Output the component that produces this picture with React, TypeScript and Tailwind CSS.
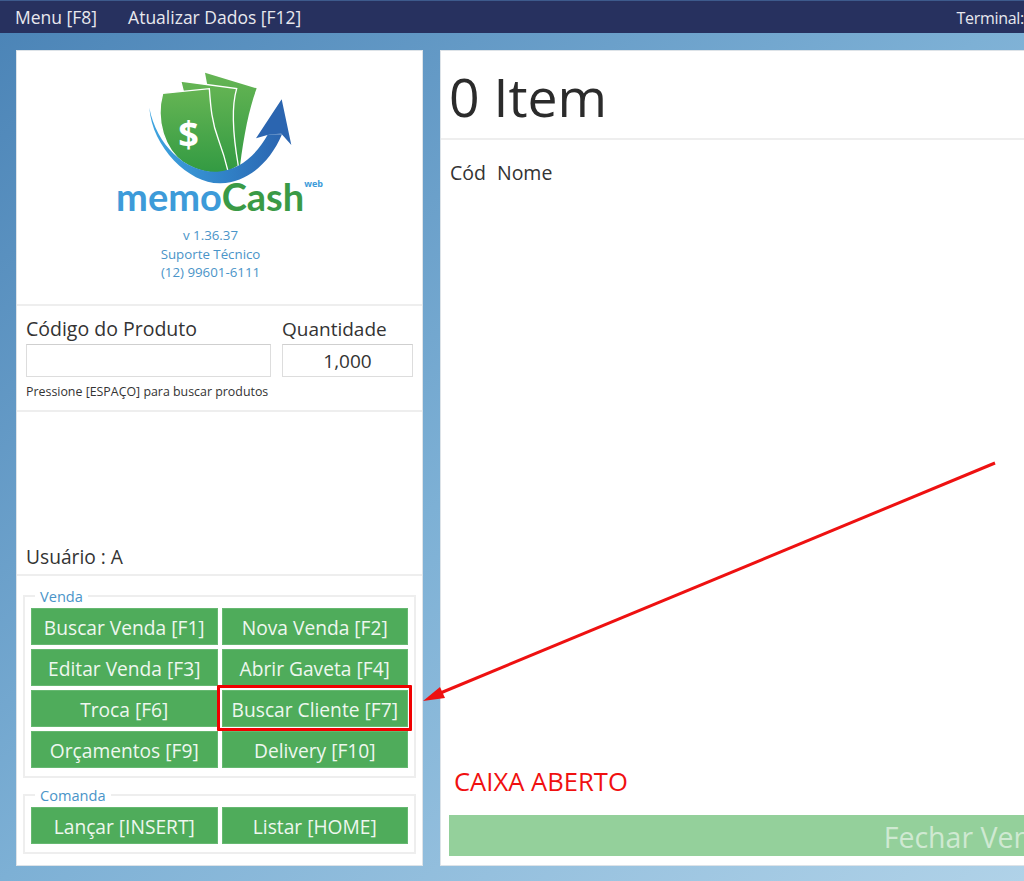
const vendaButtons = [
  "Buscar Venda [F1]",
  "Nova Venda [F2]",
  "Editar Venda [F3]",
  "Abrir Gaveta [F4]",
  "Troca [F6]",
  "Buscar Cliente [F7]",
  "Orçamentos [F9]",
  "Delivery [F10]",
];

const comandaButtons = ["Lançar [INSERT]", "Listar [HOME]"];

const Logo = () => (
  <svg width="260" height="135" viewBox="0 0 780 405" className="shrink-0">
    <defs>
      <linearGradient id="note" x1="0" y1="0" x2="0" y2="1">
        <stop offset="0" stopColor="#66b554" />
        <stop offset="1" stopColor="#329a42" />
      </linearGradient>
      <linearGradient id="arc" x1="0" y1="0" x2="1" y2="0">
        <stop offset="0" stopColor="#3fa5e0" />
        <stop offset="0.55" stopColor="#3183c8" />
        <stop offset="1" stopColor="#2b65b0" />
      </linearGradient>
    </defs>
    {/* back note */}
    <path d="M345 65 L500 112 C478 170 462 250 450 345 L400 360 Z" fill="url(#note)" />
    {/* middle note */}
    <path
      d="M272 90 L440 113 C420 180 432 270 445 345 L415 362 L300 200 Z"
      fill="url(#note)"
      stroke="#fff"
      strokeWidth="4"
    />
    {/* front note */}
    <path
      d="M218 127 L358 113 C362 170 366 215 385 265 C398 300 408 335 415 364 C370 372 320 362 280 335 C225 295 195 210 218 127 Z"
      fill="url(#note)"
      stroke="#fff"
      strokeWidth="4"
    />
    <text
      x="296"
      y="288"
      textAnchor="middle"
      fontSize="108"
      fontWeight="700"
      fill="#fff"
      fontFamily="'Open Sans', sans-serif"
    >
      $
    </text>
    {/* swoosh + arrow */}
    <path
      d="M178 170 C186 290 300 400 392 397 C475 393 540 335 576 250 L534 250 C498 315 445 358 382 362 C290 366 200 285 178 170 Z"
      fill="url(#arc)"
    />
    <path d="M575 145 L498 262 L540 250 L574 248 L604 282 Z" fill="#2b65b0" />
  </svg>
);

const GreenButton = ({ label }: { label: string }) => (
  <button className="relative h-[37px] pt-[3px] bg-[#4fac5b] border border-[#66b871] text-[19.2px] text-[#eef7ef] flex items-center justify-center whitespace-nowrap">
    {label}
    {label === "Buscar Cliente [F7]" && (
      <span className="absolute -left-[6px] -right-[5px] -top-[6px] -bottom-[5px] border-[3px] border-[#f00000] rounded-[1px]" />
    )}
  </button>
);

const Group = ({ title, buttons }: { title: string; buttons: string[] }) => (
  <fieldset className="border-2 border-[#eeeeee] px-[6px] pb-[8px]">
    <legend className="ml-[4px] px-[5px] text-[14.6px] leading-[16px] text-[#4a94c8]">{title}</legend>
    <div className="grid grid-cols-2 gap-x-[4px] gap-y-[4px] mt-[4px]">
      {buttons.map((b) => (
        <GreenButton key={b} label={b} />
      ))}
    </div>
  </fieldset>
);

export default function App() {
  return (
    <div
      className="relative w-[1024px] h-[881px] overflow-hidden flex flex-col bg-linear-to-br from-[#4a83b6] via-[#7db0d5] to-[#b0d2e8] text-[#333333]"
      style={{ fontFamily: "'Open Sans', 'Noto Sans', sans-serif" }}
    >
      {/* top bar */}
      <div className="h-[33px] shrink-0 bg-[#27315f] border-t border-[#3d5a8c] flex items-center pl-[15px] pt-[1px] text-[17.5px] text-[#e8e8ee] whitespace-nowrap">
        <span>Menu [F8]</span>
        <span className="ml-[31px]">Atualizar Dados [F12]</span>
        <span className="ml-auto text-[16px] tracking-[-0.3px]">Terminal:</span>
      </div>

      <div className="flex-1 flex gap-[17px] pl-[16px] pt-[17px] pb-[15px] min-h-0">
        {/* left column */}
        <div className="w-[407px] shrink-0 bg-white border border-[#dde3e8] flex flex-col">
          <div className="h-[255px] shrink-0 flex flex-col items-center border-b-2 border-[#eeeeee]">
            <Logo />
            <div className="flex items-start h-[30px] -mt-[5px]">
              <span className="text-[38px] leading-[30px] font-bold" style={{ fontFamily: "Lato, sans-serif" }}>
                <span className="text-[#3d9bd9]">memo</span>
                <span className="text-[#3a9a46]">Cash</span>
              </span>
              <span className="text-[9px] leading-[8px] font-bold text-[#3d9bd9] -mt-[1px]">web</span>
            </div>
            <div className="mt-[15px] mr-[18px] text-[13.3px] leading-[18.5px] text-[#4a94c8] text-center">
              <p>v 1.36.37</p>
              <p>Suporte Técnico</p>
              <p>(12) 99601-6111</p>
            </div>
          </div>

          <div className="h-[106px] shrink-0 border-b-2 border-[#eeeeee] px-[9px] pt-[10px]">
            <div className="flex gap-[11px]">
              <div className="w-[245px]">
                <p className="text-[19.5px] leading-[26px] whitespace-nowrap">Código do Produto</p>
                <div className="h-[33px] mt-[2px] border border-[#dddddd] border-t-[#cfcfcf]" />
              </div>
              <div className="w-[131px]">
                <p className="text-[19px] leading-[26px]">Quantidade</p>
                <div className="h-[33px] mt-[2px] pt-[1px] border border-[#dddddd] border-t-[#cfcfcf] flex items-center justify-center text-[19px]">
                  1,000
                </div>
              </div>
            </div>
            <p className="mt-[7px] text-[12.4px] leading-[16px] whitespace-nowrap">Pressione [ESPAÇO] para buscar produtos</p>
          </div>

          <div className="flex-1 flex items-end px-[9px] pb-[2px] border-b-2 border-[#eeeeee] text-[19.2px]">
            Usuário : A
          </div>

          <div className="shrink-0 px-[6px] pt-[12px] pb-[11px] flex flex-col gap-[9px]">
            <Group title="Venda" buttons={vendaButtons} />
            <Group title="Comanda" buttons={comandaButtons} />
          </div>
        </div>

        {/* right column */}
        <div className="w-[1068px] shrink-0 bg-white border border-[#dde3e8] flex flex-col">
          <div className="h-[89px] shrink-0 border-b-2 border-[#eeeeee] px-[8px] pt-[5px] flex items-center text-[53.5px] text-[#2b2b2b]">
            0 Item
          </div>
          <div className="flex gap-[11px] px-[9px] pt-[18px] text-[19.5px]">
            <span>Cód</span>
            <span>Nome</span>
          </div>
          <div className="mt-auto px-[13px] text-[25.6px] leading-[32px] text-[#f01010]">CAIXA ABERTO</div>
          <div className="mx-[8px] mt-[17px] mb-[9px] h-[41px] pt-[3px] bg-[#94d09b] flex items-center justify-center text-[28.5px] text-[#cfe9d2]">
            Fechar Venda
          </div>
        </div>
      </div>

      {/* annotation arrow */}
      <svg className="absolute inset-0 pointer-events-none" width="1024" height="881" viewBox="0 0 1024 881">
        <line x1="995" y1="463" x2="438" y2="694" stroke="#ee1111" strokeWidth="3" />
        <polygon points="423,701 440,687 445,698" fill="#ee1111" />
      </svg>
    </div>
  );
}
